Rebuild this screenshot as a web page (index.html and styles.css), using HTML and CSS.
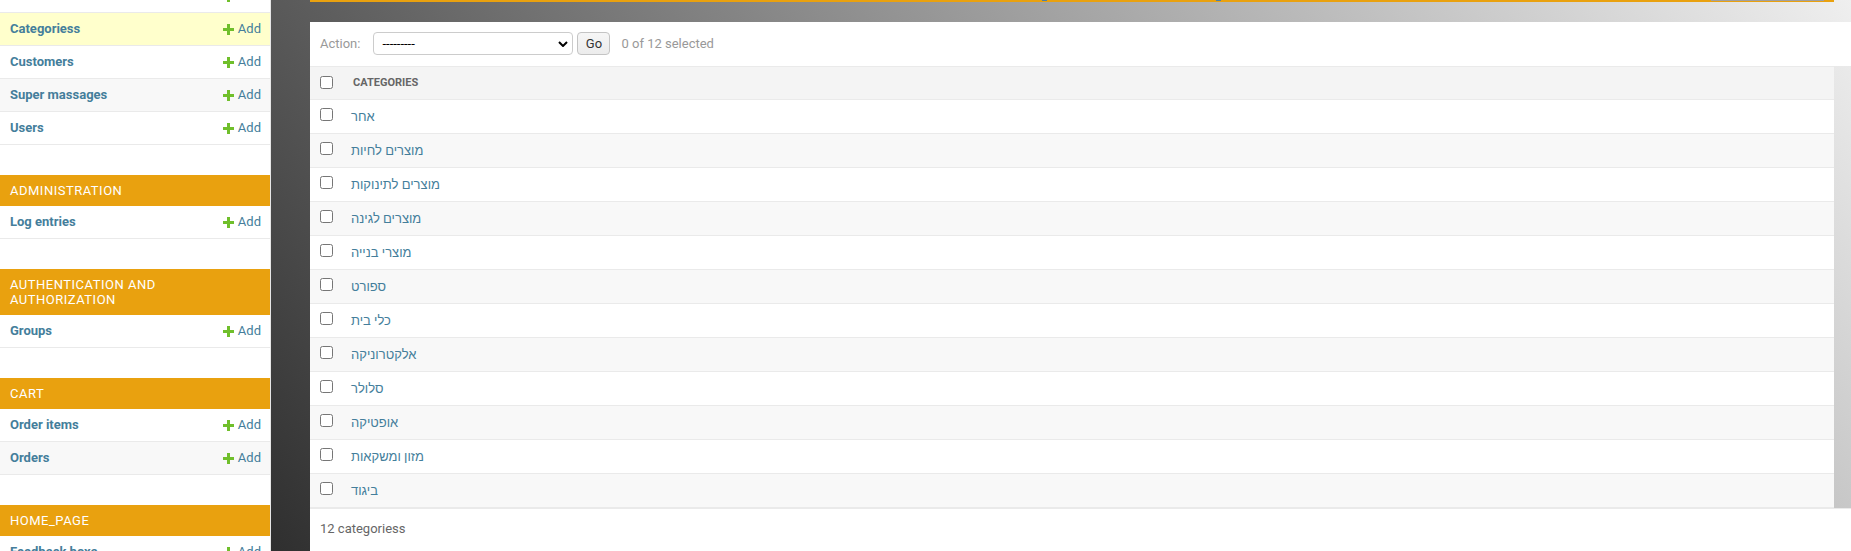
FILE: index.html
```html
<!DOCTYPE html>
<html lang="en">
<head>
<meta charset="utf-8">
<title>Select categories to change</title>
<link rel="stylesheet" href="styles.css">
</head>
<body>
<div class="layout">
  <nav class="sidebar">
    <div class="sidebar-inner">
      <div class="module">
        <div class="model-row"><a class="model-name">Brands</a><a class="addlink"><svg class="plus" viewBox="0 0 11 11" width="11" height="11"><path d="M4 0h3v4h4v3H7v4H4V7H0V4h4z"/></svg>Add</a></div>
        <div class="model-row current"><a class="model-name">Categoriess</a><a class="addlink"><svg class="plus" viewBox="0 0 11 11" width="11" height="11"><path d="M4 0h3v4h4v3H7v4H4V7H0V4h4z"/></svg>Add</a></div>
        <div class="model-row"><a class="model-name">Customers</a><a class="addlink"><svg class="plus" viewBox="0 0 11 11" width="11" height="11"><path d="M4 0h3v4h4v3H7v4H4V7H0V4h4z"/></svg>Add</a></div>
        <div class="model-row alt"><a class="model-name">Super massages</a><a class="addlink"><svg class="plus" viewBox="0 0 11 11" width="11" height="11"><path d="M4 0h3v4h4v3H7v4H4V7H0V4h4z"/></svg>Add</a></div>
        <div class="model-row"><a class="model-name">Users</a><a class="addlink"><svg class="plus" viewBox="0 0 11 11" width="11" height="11"><path d="M4 0h3v4h4v3H7v4H4V7H0V4h4z"/></svg>Add</a></div>
      </div>
      <div class="module">
        <div class="caption">Administration</div>
        <div class="model-row"><a class="model-name">Log entries</a><a class="addlink"><svg class="plus" viewBox="0 0 11 11" width="11" height="11"><path d="M4 0h3v4h4v3H7v4H4V7H0V4h4z"/></svg>Add</a></div>
      </div>
      <div class="module">
        <div class="caption">Authentication and Authorization</div>
        <div class="model-row"><a class="model-name">Groups</a><a class="addlink"><svg class="plus" viewBox="0 0 11 11" width="11" height="11"><path d="M4 0h3v4h4v3H7v4H4V7H0V4h4z"/></svg>Add</a></div>
      </div>
      <div class="module">
        <div class="caption">Cart</div>
        <div class="model-row"><a class="model-name">Order items</a><a class="addlink"><svg class="plus" viewBox="0 0 11 11" width="11" height="11"><path d="M4 0h3v4h4v3H7v4H4V7H0V4h4z"/></svg>Add</a></div>
        <div class="model-row alt"><a class="model-name">Orders</a><a class="addlink"><svg class="plus" viewBox="0 0 11 11" width="11" height="11"><path d="M4 0h3v4h4v3H7v4H4V7H0V4h4z"/></svg>Add</a></div>
      </div>
      <div class="module">
        <div class="caption">Home_page</div>
        <div class="model-row"><a class="model-name">Feedback boxs</a><a class="addlink"><svg class="plus" viewBox="0 0 11 11" width="11" height="11"><path d="M4 0h3v4h4v3H7v4H4V7H0V4h4z"/></svg>Add</a></div>
        <div class="model-row alt"><a class="model-name">Sliders</a><a class="addlink"><svg class="plus" viewBox="0 0 11 11" width="11" height="11"><path d="M4 0h3v4h4v3H7v4H4V7H0V4h4z"/></svg>Add</a></div>
      </div>
    </div>
  </nav>

  <main class="main">
    <div class="topbar">
      <div class="topbar-line">
        <span class="mark mark-blue mark-a"></span>
        <span class="mark mark-blue mark-b"></span>
        <span class="mark mark-grey"></span>
      </div>
    </div>

    <div class="changelist">
      <div class="actions">
        <label class="action-label">Action:</label>
        <span class="select-wrap">
          <select class="action-select"><option>---------</option></select>
          <svg class="chevron" viewBox="0 0 10 6" width="10" height="6"><path d="M1 1l4 4 4-4" fill="none" stroke="#000" stroke-width="2"/></svg>
        </span>
        <button class="go-button" type="button">Go</button>
        <span class="action-counter">0 of 12 selected</span>
      </div>

      <div class="results">
        <table class="result-list">
          <thead>
            <tr>
              <th class="check-col"><input type="checkbox"></th>
              <th class="name-col">Categories</th>
            </tr>
          </thead>
          <tbody>
            <tr><td class="check-col"><input type="checkbox"></td><td class="name-col"><a>אחר</a></td></tr>
            <tr class="alt"><td class="check-col"><input type="checkbox"></td><td class="name-col"><a>מוצרים לחיות</a></td></tr>
            <tr><td class="check-col"><input type="checkbox"></td><td class="name-col"><a>מוצרים לתינוקות</a></td></tr>
            <tr class="alt"><td class="check-col"><input type="checkbox"></td><td class="name-col"><a>מוצרים לגינה</a></td></tr>
            <tr><td class="check-col"><input type="checkbox"></td><td class="name-col"><a>מוצרי בנייה</a></td></tr>
            <tr class="alt"><td class="check-col"><input type="checkbox"></td><td class="name-col"><a>ספורט</a></td></tr>
            <tr><td class="check-col"><input type="checkbox"></td><td class="name-col"><a>כלי בית</a></td></tr>
            <tr class="alt"><td class="check-col"><input type="checkbox"></td><td class="name-col"><a>אלקטרוניקה</a></td></tr>
            <tr><td class="check-col"><input type="checkbox"></td><td class="name-col"><a>סלולר</a></td></tr>
            <tr class="alt"><td class="check-col"><input type="checkbox"></td><td class="name-col"><a>אופטיקה</a></td></tr>
            <tr><td class="check-col"><input type="checkbox"></td><td class="name-col"><a>מזון ומשקאות</a></td></tr>
            <tr class="alt"><td class="check-col"><input type="checkbox"></td><td class="name-col"><a>ביגוד</a></td></tr>
          </tbody>
        </table>
      </div>

      <div class="paginator">12 categoriess</div>
    </div>
  </main>
</div>
</body>
</html>
```

FILE: styles.css
```css
html, body {
  margin: 0;
  padding: 0;
  height: 551px;
  overflow: hidden;
}

body {
  font-family: Roboto, "Liberation Sans", "Noto Sans", sans-serif;
  font-size: 13px;
  color: #333;
  background: #fff;
}

a {
  color: #447e9b;
  text-decoration: none;
}

.layout {
  display: flex;
  height: 551px;
  overflow: hidden;
}

/* ---------- Sidebar ---------- */
.sidebar {
  width: 270px;
  flex: none;
  background: #fff;
  border-right: 1px solid #e6e6e6;
  overflow: hidden;
}

.sidebar-inner {
  margin-top: -20px;
}

.module {
  margin-bottom: 30px;
}

.caption {
  background: #e9a10f;
  color: #fff;
  padding: 8px 10px;
  line-height: 15px;
  font-size: 13px;
  letter-spacing: 0.5px;
  text-transform: uppercase;
}

.model-row {
  display: flex;
  align-items: center;
  justify-content: space-between;
  height: 32px;
  padding: 0 9px 0 10px;
  border-bottom: 1px solid #eaeaea;
  background: #fff;
}

.model-row.alt {
  background: #f8f8f8;
}

.model-row.current {
  background: #ffffcc;
}

.model-name {
  font-weight: 700;
  line-height: 16px;
}

.addlink {
  display: flex;
  align-items: center;
  gap: 4px;
  line-height: 16px;
}

.plus {
  display: block;
  fill: #70bf2b;
}

/* ---------- Main ---------- */
.main {
  flex: 1;
  display: flex;
  flex-direction: column;
  padding-left: 39px;
  background: linear-gradient(51deg, #2f2f2f 0%, #efefef 100%);
  min-width: 0;
}

.topbar {
  height: 22px;
  margin-right: 17px;
  flex: none;
}

.topbar-line {
  position: relative;
  height: 2px;
  background: #e9a10f;
}

.mark {
  position: absolute;
  top: 0;
  height: 1px;
}

.mark-blue {
  width: 5px;
  background: #4a7fa8;
}

.mark-a { left: 732px; }
.mark-b { left: 906px; }

.mark-grey {
  left: 1401px;
  width: 113px;
  background: #a0a0a0;
}

.changelist {
  flex: 1;
  display: flex;
  flex-direction: column;
}

.actions {
  display: flex;
  align-items: center;
  height: 23px;
  padding: 10px 10px 11px 10px;
  background: #fff;
}

.action-label {
  color: #999;
  margin-right: 13px;
  line-height: 16px;
}

.select-wrap {
  position: relative;
  display: block;
  width: 200px;
  height: 23px;
}

.action-select {
  appearance: none;
  -webkit-appearance: none;
  box-sizing: border-box;
  width: 200px;
  height: 23px;
  margin: 0;
  padding: 0 8px;
  border: 1px solid #cccccc;
  border-radius: 4px;
  background: #fff;
  color: #000;
  font-family: Roboto, "Liberation Sans", sans-serif;
  font-size: 13px;
}

.chevron {
  position: absolute;
  right: 5px;
  top: 9px;
  width: 10px;
  height: 6px;
  pointer-events: none;
}

.go-button {
  box-sizing: border-box;
  width: 33px;
  height: 23px;
  margin: 0 0 0 4px;
  padding: 0;
  border: 1px solid #c4c4c4;
  border-radius: 4px;
  background: linear-gradient(#f6f6f6, #ececec);
  color: #333;
  font-family: Roboto, "Liberation Sans", sans-serif;
  font-size: 13px;
}

.action-counter {
  margin-left: 11px;
  color: #999;
  line-height: 16px;
}

.results {
  margin-right: 17px;
  flex: none;
}

.result-list {
  width: 100%;
  border-collapse: separate;
  border-spacing: 0;
  background: #fff;
}

.result-list thead th {
  background: #f4f4f4;
  border-top: 1px solid #eaeaea;
  border-bottom: 1px solid #eaeaea;
  padding: 8px 10px 8px 12px;
  line-height: 16px;
  height: 16px;
  text-align: left;
  font-size: 11px;
  font-weight: 700;
  color: #666;
  text-transform: uppercase;
  vertical-align: top;
}

.result-list thead th.check-col {
  padding: 9px 0 0 10px;
  width: 21px;
}

.result-list td {
  padding: 8px 10px;
  line-height: 17px;
  height: 17px;
  border-bottom: 1px solid #eaeaea;
  vertical-align: top;
  background: #fff;
}

.result-list tr.alt td {
  background: #f8f8f8;
}

.result-list td.check-col {
  padding: 8px 0 0 10px;
  width: 21px;
}

.check-col input {
  display: block;
  margin: 0;
  width: 13px;
  height: 13px;
}

.name-col a {
  font-size: 13px;
}

.paginator {
  flex: 1;
  background: #fff;
  border-top: 1px solid #eaeaea;
  padding: 11px 10px;
  line-height: 18px;
  color: #666;
}
```
